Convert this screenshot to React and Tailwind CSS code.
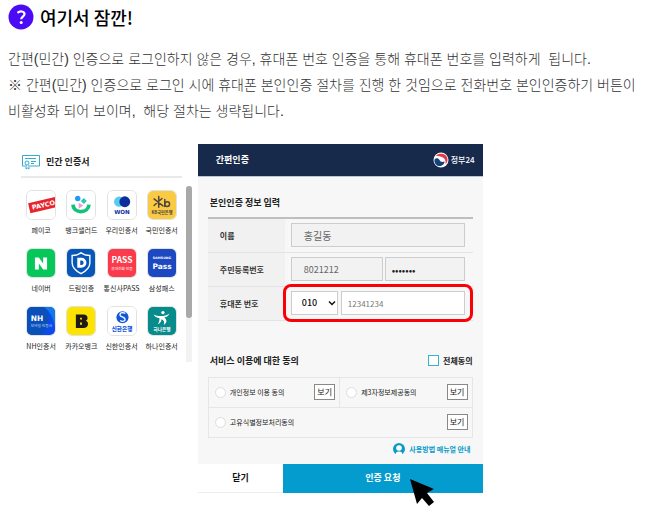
import React from "react";

// Brand tiles are drawn on a shared 30x30 canvas
const PaycoIcon = () => (
  <>
    <rect width="30" height="30" fill="#fff" />
    <g transform="rotate(-13 15 15)">
      <rect x="2" y="10" width="32" height="11" fill="#e8242b" />
      <text x="5" y="18" fontSize="7" fontWeight="700" fill="#fff" className="font-['DejaVu_Sans',sans-serif]">PAYCO</text>
    </g>
  </>
);

const BankSaladIcon = () => (
  <>
    <rect width="30" height="30" fill="#fff" />
    <path d="M6.500 14.500c.5 10 16.500 10 17 0" fill="none" stroke="#12c27c" strokeWidth="4" />
    <circle cx="11.500" cy="8" r="2.900" fill="#1d9bf5" />
    <path d="M18 7.500l3.200 3.200-3.200 3.200-3.200-3.200z" fill="#2cc7b5" />
    <path d="M12.500 12.500l5 3-5 3.500z" fill="#f39ad0" />
  </>
);

const WooriIcon = () => (
  <>
    <rect width="30" height="30" fill="#fff" />
    <circle cx="12" cy="11.500" r="5.500" fill="#55cdf0" />
    <circle cx="18" cy="11.500" r="5.800" fill="#0c2f9c" />
    <text x="15" y="24.500" textAnchor="middle" fontSize="6" fontWeight="700" fill="#0c2f9c" className="font-['DejaVu_Sans',sans-serif]">WON</text>
  </>
);

const KbIcon = () => (
  <>
    <rect width="30" height="30" fill="#f9cb45" />
    <g fill="none" stroke="#51463d" strokeWidth="1.600" strokeLinecap="round">
      <path d="M11.500 6v11.500M6.500 8.500l9.500 7.500M15 8l-8.500 7.500M18 9v7.500" />
      <circle cx="20.500" cy="14" r="2.600" />
    </g>
    <text x="15" y="24.500" textAnchor="middle" fontSize="4.500" fontWeight="700" fill="#51463d">KB국민은행</text>
  </>
);

const NaverIcon = () => (
  <>
    <rect width="30" height="30" fill="#07c75b" />
    <path d="M8.500 9h4.200l4.600 6.500V9h4.200v13h-4.200l-4.600-6.500V22H8.500z" fill="#fff" />
  </>
);

const DreamIcon = () => (
  <>
    <rect width="30" height="30" fill="#0757b8" />
    <path d="M15 4c3 2.300 6 3 9.500 3v8c0 5-4 8.500-9.500 11.500C9.500 23.500 5.500 20 5.500 15V7C9 7 12 6.300 15 4z" fill="none" stroke="#fff" strokeWidth="1.500" />
    <path fillRule="evenodd" d="M11 9.500h4.500a5.300 5.300 0 0 1 0 10.600H11zm3.200 2.900v4.800h1.200a2.400 2.400 0 0 0 0-4.800z" fill="#fff" />
  </>
);

const PassIcon = () => (
  <>
    <rect width="30" height="30" fill="#fb3b4b" />
    <text x="15" y="15" textAnchor="middle" fontSize="9" fontWeight="700" fill="#fff">PASS</text>
    <text x="15" y="22.500" textAnchor="middle" fontSize="4" fill="#fff">휴대전화 인증</text>
  </>
);

const SamsungIcon = () => (
  <>
    <rect width="30" height="30" fill="#1c49c2" />
    <text x="15" y="11" textAnchor="middle" fontSize="3.500" fontWeight="700" fill="#fff" className="font-['DejaVu_Sans',sans-serif]">SAMSUNG</text>
    <text x="15" y="21" textAnchor="middle" fontSize="8" fontWeight="700" fill="#fff" className="font-['DejaVu_Sans',sans-serif]">Pass</text>
  </>
);

const NhIcon = () => (
  <>
    <rect width="30" height="30" fill="#0a4bea" />
    <path d="M0 0h18c8 7 7 22-4 30H0z" fill="#0b50b8" />
    <path d="M18 0h12v22C28 10 24 4 18 0z" fill="#1179ea" />
    <text x="4" y="15" fontSize="8" fontWeight="700" fill="#fff" className="font-['DejaVu_Sans',sans-serif]">NH</text>
    <text x="4" y="21" fontSize="4" fill="#bcd8ff">모바일 인증서</text>
  </>
);

const KakaoIcon = () => (
  <>
    <rect width="30" height="30" fill="#fde300" />
    <path fillRule="evenodd" d="M9.500 8h8c3.200 0 4.500 1.600 4.500 3.700 0 1.500-.7 2.500-1.800 3 1.500.5 2.300 1.700 2.300 3.400 0 2.900-2 4.400-5 4.400h-8zM14 11.500v2h2v-2zM14 16.500v2.500h2v-2.500z" fill="#1f1a17" />
  </>
);

const ShinhanIcon = () => (
  <>
    <rect width="30" height="30" fill="#fff" />
    <circle cx="15.500" cy="11" r="6.500" fill="#1357d8" />
    <path d="M18.500 7c-3-2-6.500-.3-5.500 2 .8 1.800 5 1.700 5.300 4.200.2 2-2.800 3-5.300 1.300" fill="none" stroke="#fff" strokeWidth="1.400" />
    <text x="15" y="25.500" textAnchor="middle" fontSize="6" fontWeight="900" fill="#1357d8">신한은행</text>
  </>
);

const HanaIcon = () => (
  <>
    <rect width="30" height="30" fill="#078b8b" />
    <circle cx="16" cy="6" r="1.800" fill="#fff" />
    <path d="M6 8c5 2.500 12 2.500 17-1-1 2.600-3 3.700-5.500 4.300 3.500 2.700 2.700 6-.7 8 1.200-3 .5-5.300-2.300-6.300-.2 2.500-1.500 4.300-4 5.500 1.400-2 2-4.500 1.700-6.800C9.500 11.500 7 10.400 6 8z" fill="#fff" />
    <text x="15" y="25.500" textAnchor="middle" fontSize="5" fontWeight="700" fill="#fff">하나은행</text>
  </>
);

const PROVIDERS = [
  { name: "페이코", Icon: PaycoIcon },
  { name: "뱅크샐러드", Icon: BankSaladIcon },
  { name: "우리인증서", Icon: WooriIcon },
  { name: "국민인증서", Icon: KbIcon },
  { name: "네이버", Icon: NaverIcon },
  { name: "드림인증", Icon: DreamIcon },
  { name: "통신사PASS", Icon: PassIcon },
  { name: "삼성패스", Icon: SamsungIcon },
  { name: "NH인증서", Icon: NhIcon },
  { name: "카카오뱅크", Icon: KakaoIcon },
  { name: "신한인증서", Icon: ShinhanIcon },
  { name: "하나인증서", Icon: HanaIcon },
];

const Notice = () => (
  <header className="pt-1 px-2">
    <div className="flex items-center gap-1.5">
      <svg viewBox="0 0 26 26" className="size-[26px] shrink-0" aria-hidden="true">
        <circle cx="13" cy="13" r="12.500" fill="#4b0cf5" />
        <path d="M9.500 8.800c2.300-2 7-1.900 7 1.300 0 2.500-3.300 2.700-3.300 5.200" fill="none" stroke="#fff" strokeWidth="2.200" />
        <circle cx="13.200" cy="18.500" r="1.500" fill="#fff" />
      </svg>
      <h1 className="text-[18px] leading-6 font-medium text-black">여기서 잠깐!</h1>
    </div>
    <div className="mt-4 break-keep font-['Liberation_Sans','Noto_Sans_CJK_KR',sans-serif] text-[14px] leading-[26px] font-light text-[#333]">
      <p>간편(민간) 인증으로 로그인하지 않은 경우, 휴대폰 번호 인증을 통해 휴대폰 번호를 입력하게&nbsp; 됩니다.</p>
      <p>
        ※ 간편(민간) 인증으로 로그인 시에 휴대폰 본인인증 절차를 진행 한 것임으로 전화번호 본인인증하기 버튼이
        비활성화 되어 보이며,&nbsp; 해당 절차는 생략됩니다.
      </p>
    </div>
  </header>
);

const ProviderPanel = () => (
  <section className="pt-1.5">
    <div className="flex items-center gap-1.5 h-6 pl-px">
      <svg viewBox="0 0 18 16" className="w-[18px] h-4 shrink-0" fill="none" stroke="#35a9d3" aria-hidden="true">
        <path d="M3 12H.5V1.500h17V12H8" />
        <path d="M3 4.500h11M9 7.500h5M9 9.500h3" />
        <circle cx="5" cy="9" r="2" />
        <path d="M4 11v4l1.500-1L7 15v-4" />
      </svg>
      <h2 className="text-[9px] leading-4 font-bold text-[#222]">민간 인증서</h2>
    </div>
    <div className="mt-0.5 mr-2.5 border-t-2 border-[#e9e9e9]" />
    <div className="mt-2 flex gap-1">
      <ul className="flex-1 grid grid-cols-4 gap-y-3.5 pt-1 pb-3">
        {PROVIDERS.map(({ name, Icon }) => (
          <li key={name} className="min-w-0">
            <button type="button" className="w-full h-11 flex flex-col items-center gap-1">
              <span className="size-[30px] shrink-0 rounded-md overflow-hidden border border-[#e2e2e2]">
                <svg viewBox="0 0 30 30" className="size-full" aria-hidden="true">
                  <Icon />
                </svg>
              </span>
              <span className="text-[7px] leading-3 whitespace-nowrap text-[#222]">{name}</span>
            </button>
          </li>
        ))}
      </ul>
      {/* scroll track */}
      <div className="w-1.5 bg-[#f2f2f2]">
        <div className="h-3/4 rounded-full bg-[#a9a9a9]" />
      </div>
    </div>
  </section>
);

const FormRow = ({ label, htmlFor, children }) => (
  <tr className="border-b border-[#e3e3e3]">
    <th scope="row" className="w-[77px] pl-3 pt-0.5 text-left bg-[#f1f1f1] text-[8px] leading-4 font-bold text-[#333]">
      <label htmlFor={htmlFor} className="whitespace-nowrap">{label}</label>
    </th>
    <td className="h-[34px] pl-1.5 pr-2">{children}</td>
  </tr>
);

const AgreeItem = ({ id, label, className = "" }) => (
  <div className={`flex items-center gap-1 h-[29px] pl-1.5 pr-1 ${className}`}>
    <input id={id} type="checkbox" className="appearance-none size-[11px] shrink-0 rounded-full border border-[#ddd] bg-white" />
    <label htmlFor={id} className="flex-1 text-[7px] leading-3 whitespace-nowrap text-[#222]">{label}</label>
    <button type="button" className="w-[21px] h-4 border border-[#888] bg-white text-[8px] leading-3 text-[#222]">보기</button>
  </div>
);

const AuthForm = () => (
  <section className="relative bg-[#f7f7f7]">
    <div className="h-[33px] pl-[18px] pr-2 flex items-center justify-between bg-[#182a4c] border-b border-[#b9c6d8] text-white">
      <h2 className="text-[9px] leading-4 font-bold">간편인증</h2>
      <div className="flex items-center gap-0.5 text-[8px] leading-4 font-medium">
        <svg viewBox="0 0 16 16" className="size-4" aria-hidden="true">
          <circle cx="8" cy="8" r="7.500" fill="#fff" />
          <path d="M3 3.500C6 .5 14 1 14.500 7c.2 2-.5 4-2 5 .5-3-.2-5-2.500-6.500S5 4.500 3 3.500z" fill="#e5364b" />
          <path d="M1.500 7.500C3 5.500 5.500 6 6.500 8s2.500 2.500 5 1.500c0 3-3 5-6 4.500-2.500-.6-4.500-3.500-4-6.500z" fill="#14407c" />
        </svg>
        <span>정부24</span>
      </div>
    </div>

    <div className="px-[10px] pt-4">
      <h3 className="pl-0.5 text-[9px] leading-5 font-bold text-[#222]">본인인증 정보 입력</h3>
      <table className="mt-1 w-full table-fixed border-collapse border-t-2 border-[#bfbfbf]">
        <tbody>
          <FormRow label="이름" htmlFor="name">
            <input id="name" defaultValue="홍길동" className="block w-full h-6 px-3 border border-[#ccc] bg-[#f2f2f2] text-[10px] text-[#666]" />
          </FormRow>
          <FormRow label="주민등록번호" htmlFor="rrn-front">
            <div className="flex gap-0.5">
              <input id="rrn-front" defaultValue="8021212" className="min-w-0 flex-1 h-6 px-3 border border-[#ccc] bg-[#f2f2f2] text-[9px] text-[#666]" />
              <input type="password" aria-label="주민등록번호 뒷자리" defaultValue="1234567" className="min-w-0 flex-1 h-6 px-1.5 border border-[#ccc] bg-[#f2f2f2] text-[10px] text-[#222]" />
            </div>
          </FormRow>
          <FormRow label="휴대폰 번호" htmlFor="phone-prefix">
            <div className="relative flex gap-[3px]">
              <div className="relative w-[47px] shrink-0">
                <select id="phone-prefix" className="block appearance-none w-full h-6 pl-2.5 border border-[#ccc] bg-white text-[9px] font-medium text-[#111]">
                  <option>010</option>
                </select>
                <svg viewBox="0 0 8 8" className="absolute right-0.5 top-2 size-2 pointer-events-none" fill="none" stroke="#111" strokeWidth="1.500" aria-hidden="true">
                  <path d="M1 2.500l3 3 3-3" />
                </svg>
              </div>
              <input aria-label="휴대폰 번호 뒷자리" defaultValue="12341234" className="min-w-0 flex-1 h-6 px-1.5 border border-[#ccc] bg-white text-[8px] text-[#777]" />
              {/* highlight ring around the phone fields */}
              <div className="absolute -inset-x-2 -inset-y-[7px] border-[3px] border-[#fb0007] rounded-lg pointer-events-none" />
            </div>
          </FormRow>
        </tbody>
      </table>

      <div className="mt-[30px] flex items-center justify-between">
        <h3 className="pl-0.5 text-[9px] leading-5 font-bold text-[#222]">서비스 이용에 대한 동의</h3>
        <div className="flex items-center gap-1">
          <input id="agree-all" type="checkbox" className="appearance-none size-[11px] border border-[#3bb0d6] bg-white" />
          <label htmlFor="agree-all" className="text-[8px] leading-3 font-bold text-[#222]">전체동의</label>
        </div>
      </div>

      <div className="mt-1.5 border border-[#e6e6e6]">
        <div className="grid grid-cols-2 border-b border-[#e6e6e6]">
          <AgreeItem id="agree-personal" label="개인정보 이용 동의" className="border-r border-[#e6e6e6]" />
          <AgreeItem id="agree-third" label="제3자정보제공동의" />
        </div>
        <AgreeItem id="agree-unique" label="고유식별정보처리동의" />
      </div>

      <a href="#manual" className="mt-1 pb-2 pr-0.5 flex items-center justify-end gap-1 text-[7px] leading-[14px] font-bold text-[#079acb]">
        <svg viewBox="0 0 12 12" className="size-3" aria-hidden="true">
          <circle cx="6" cy="6" r="6" fill="#079acb" />
          <circle cx="6" cy="5" r="2.800" fill="#fff" />
          <path d="M2.500 12c0-2.500 1.200-3.500 3.500-3.500s3.500 1 3.500 3.500z" fill="#fff" />
        </svg>
        사용방법 매뉴얼 안내
      </a>
    </div>

    <div className="grid grid-cols-[3fr_7fr] h-[29px] text-[9px] font-bold">
      <button type="button" className="border-b border-[#eee] bg-white text-[#111]">닫기</button>
      <button type="button" className="bg-[#049ccf] text-white">인증 요청</button>
    </div>

    {/* mouse pointer over the submit button */}
    <svg viewBox="0 0 25 28" className="absolute right-12 -bottom-3.5 w-[25px] h-7" aria-hidden="true">
      <path d="M0 0l24 10-7 4 7 9-5 4-7-8-5 6z" fill="#000" />
    </svg>
  </section>
);

export default function App() {
  return (
    <main className="bg-white pb-3.5 font-['Noto_Sans_CJK_KR',sans-serif]">
      <Notice />
      <div className="mt-5 w-3/4 pl-[21px] pr-[5px] grid grid-cols-[minmax(0,3fr)_minmax(0,5fr)] gap-1.5 items-start">
        <ProviderPanel />
        <AuthForm />
      </div>
    </main>
  );
}
